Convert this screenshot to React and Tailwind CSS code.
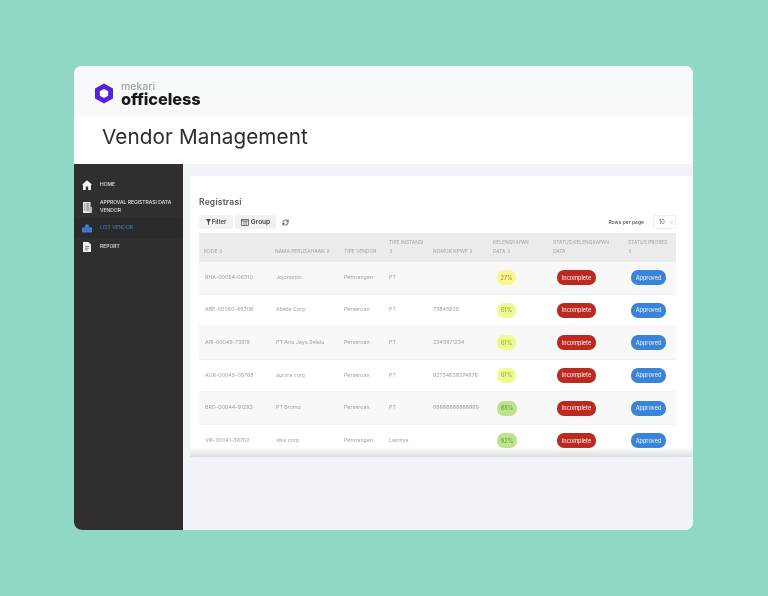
import React from "react";
import { RefreshCw, ChevronDown } from "lucide-react";

const font = { sans: "font-['Inter','Liberation_Sans',sans-serif]" };
const cols = "grid grid-cols-[71px_69px_45px_44px_60px_60px_75px_53px]";

const rows = [
  ["RHA-00054-06310", "Jojonomic", "Perorangan", "PT", "", "27%", "bg-[#f7f98f] text-[#a89a2c]", "w-[19px]"],
  ["ABE-00050-49308", "Abella Corp", "Perseroan", "PT", "73845829", "61%", "bg-[#eef98f] text-[#a2a93c]", "w-[19px]"],
  ["ARI-00049-73519", "PT Aria Jaya Selalu", "Perseroan", "PT", "2345671234", "61%", "bg-[#eef98f] text-[#a2a93c]", "w-[19px]"],
  ["AUR-00045-05768", "aurora corp", "Perseroan", "PT", "92734638274678", "61%", "bg-[#eef98f] text-[#a2a93c]", "w-[19px]"],
  ["BRO-00044-91283", "PT Bromo", "Perseroan", "PT", "68888888888889", "88%", "bg-[#bfe38d] text-[#6c9a3c]", "w-[20px]"],
  ["VIK-00041-36702", "vika corp", "Perorangan", "Lainnya", "", "92%", "bg-[#bfe38d] text-[#6c9a3c]", "w-[20px]"],
];

const headers = [
  ["KODE ⇕"],
  ["NAMA PERUSAHAAN ⇕"],
  ["TIPE VENDOR"],
  ["TIPE INSTANSI", "⇕"],
  ["NOMOR NPWP ⇕"],
  ["KELENGKAPAN", "DATA ⇕"],
  ["STATUS KELENGKAPAN", "DATA"],
  ["STATUS PROSES", "⇕"],
];

function Logo() {
  return (
    <svg width="20" height="21" viewBox="0 0 20 21">
      <path d="M10 .5 19 5.6v9.8l-9 5.1-9-5.1V5.6z" fill="#5a1fd8" />
      <path d="M10 6l4.2 2.3v4.4L10 15l-4.2-2.3V8.3z" fill="#fff" />
    </svg>
  );
}

function HomeIcon() {
  return (
    <svg width="10" height="10" viewBox="0 0 10 10" fill="#f4f4f4">
      <path d="M5 .3 9.8 4.6 9 5.2V10H6.2V6.6H3.8V10H1V5.2l-.8-.6z" />
    </svg>
  );
}

function ApprovalIcon() {
  return (
    <svg width="9" height="11" viewBox="0 0 9 11">
      <rect width="7.5" height="11" fill="#e8e8e8" />
      <rect x="6.5" y="5" width="2.5" height="6" fill="#bdbdbd" />
      <path d="M1 2h1.2M3.2 2h3M1 4h1.2M3.2 4h3M1 6h1.2M3.2 6h3M1 8h1.2M3.2 8h3" stroke="#444" strokeWidth=".8" />
    </svg>
  );
}

function VendorIcon() {
  return (
    <svg width="11" height="9" viewBox="0 0 11 9" fill="#3f80d6">
      <rect x="3.5" y="0" width="4" height="3.5" rx="1" />
      <rect x="0" y="3" width="11" height="6" rx="1" />
      <path d="M2 5h1M5 5h1M8 5h1M2 7h1M5 7h1M8 7h1" stroke="#24344f" strokeWidth=".7" />
    </svg>
  );
}

function ReportIcon() {
  return (
    <svg width="8" height="10" viewBox="0 0 8 10">
      <path d="M0 0h5.4L8 2.6V10H0z" fill="#f0f0f0" />
      <path d="M2 4.5h4M2 6.2h4M2 7.9h2.5" stroke="#555" strokeWidth=".7" />
    </svg>
  );
}

function TableIcon() {
  return (
    <svg width="8" height="7" viewBox="0 0 8 7" fill="none" stroke="#444" strokeWidth=".7">
      <rect x=".4" y=".4" width="7.2" height="6.2" />
      <path d="M.4 2h7.2M3 2v4.6M5.3 2v4.6" />
    </svg>
  );
}

function FilterIcon() {
  return (
    <svg width="5" height="6" viewBox="0 0 5 6" fill="#444">
      <path d="M0 0h5L3 3v3L2 5.4V3z" />
    </svg>
  );
}

function NavItem({ icon, active, children, className = "" }) {
  return (
    <div className={`flex items-center pl-[8px] ${active ? "bg-[#2a292b]" : ""} ${className}`}>
      <div className="flex w-[10px] justify-center">{icon}</div>
      <div className={`ml-[8px] text-[5px] leading-[7.7px] font-medium ${active ? "text-[#4b72ab]" : "text-[#e2e2e2]"}`}>{children}</div>
    </div>
  );
}

export default function App() {
  return (
    <div className={`flex h-[596px] w-[768px] items-start justify-center bg-[#8fd8c6] pt-[66px] pr-[1px] ${font.sans}`}>
      <div className="flex h-[464px] w-[619px] flex-col overflow-hidden rounded-[8px] bg-white">
        <div className="flex h-[50px] items-center gap-[7px] bg-[#f8f9fb] pt-[4px] pl-[20px]">
          <Logo />
          <div className="flex flex-col blur-[0.3px]">
            <span className="text-[10.5px] leading-[11px] font-medium text-[#a0a0a0]">mekari</span>
            <span className="text-[16.4px] leading-[14px] font-extrabold tracking-[-0.1px] text-[#18181c]">officeless</span>
          </div>
        </div>
        <div className="flex h-[48px] items-center bg-white pl-[28px] pb-[6px]">
          <h1 className="text-[20.7px] leading-[28px] font-normal tracking-[0.1px] text-[#2c2c30] blur-[0.3px]">Vendor Management</h1>
        </div>
        <div className="flex min-h-0 flex-1 blur-[0.35px]">
          <aside className="w-[109px] shrink-0 bg-[#302e30] pt-[12px]">
            <NavItem icon={<HomeIcon />} className="h-[18px]">HOME</NavItem>
            <NavItem icon={<ApprovalIcon />} className="mt-[3px] h-[20px]">
              <div className="whitespace-nowrap">APPROVAL REGISTRASI DATA</div>
              <div>VENDOR</div>
            </NavItem>
            <NavItem icon={<VendorIcon />} active className="mt-[1px] h-[20px]">LIST VENDOR</NavItem>
            <NavItem icon={<ReportIcon />} className="h-[18px]">REPORT</NavItem>
          </aside>
          <main className="flex-1 bg-[#f0f3f8] pt-[12px] pl-[7px]">
            <div className="relative h-[281px] bg-white pt-[21px] pl-[9px] pr-[17px]">
              <div className="text-[8.5px] leading-[11px] font-semibold tracking-[0.2px] text-[#555]">Registrasi</div>
              <div className="mt-[7px] flex h-[14px] items-center">
                <div className="flex h-[14px] w-[34px] items-center justify-center gap-[1px] rounded-[2px] bg-[#f3f3f3] text-[6px] leading-[14px] font-semibold text-[#444]">
                  <FilterIcon />Filter
                </div>
                <div className="ml-[2px] flex h-[14px] w-[41px] items-center justify-center gap-[2px] rounded-[2px] bg-[#f1f1f1] text-[6.5px] leading-[14px] font-semibold text-[#444]">
                  <TableIcon />Group
                </div>
                <RefreshCw className="ml-[6px] h-[7px] w-[7px] text-[#333]" strokeWidth={2.5} />
                <div className="ml-auto text-[5px] leading-[14px] font-medium text-[#555]">Rows per page</div>
                <div className="ml-[9px] flex h-[14px] w-[23px] items-center justify-between rounded-[2px] border border-[#eeeeee] pl-[5px] pr-[1px] text-[5.5px] text-[#555]">
                  10
                  <ChevronDown className="h-[5px] w-[5px] text-[#777]" />
                </div>
              </div>
              <div className="mt-[4px]">
                <div className={`${cols} h-[29px] items-end bg-[#ebebeb] pb-[6px] text-[4.9px] leading-[9px] text-[#a6a6a6]`}>
                  {headers.map((h, i) => (
                    <div key={i} className="pl-[5px]">
                      {h.map((line) => (
                        <div key={line} className="whitespace-nowrap">{line}</div>
                      ))}
                    </div>
                  ))}
                </div>
                {rows.map((r, i) => (
                  <div
                    key={r[0]}
                    className={`${cols} h-[32.6px] items-center border-b border-[#f1f1f1] text-[5.3px] text-[#a3a3a3] ${i % 2 === 0 ? "bg-[#f8f8f8]" : "bg-white"}`}
                  >
                    <div className="pl-[6px] whitespace-nowrap">{r[0]}</div>
                    <div className="pl-[6px] whitespace-nowrap">{r[1]}</div>
                    <div className="pl-[5px] whitespace-nowrap">{r[2]}</div>
                    <div className="pl-[5px] whitespace-nowrap">{r[3]}</div>
                    <div className="pl-[5px] whitespace-nowrap">{r[4]}</div>
                    <div className="pl-[4px]">
                      <div className={`ml-[5px] flex h-[15px] items-center justify-center rounded-[7px] text-[5.5px] font-medium ${r[6]} ${r[7]}`}>{r[5]}</div>
                    </div>
                    <div className="pl-[4px]">
                      <div className="ml-[5px] flex h-[15px] w-[39px] items-center justify-center rounded-[7px] bg-[#bb2a20] text-[5.5px] font-medium text-[#f8e4e1]">Incomplete</div>
                    </div>
                    <div className="pl-[3px]">
                      <div className="ml-[5px] flex h-[15px] w-[35px] items-center justify-center rounded-[7px] bg-[#3a83da] text-[5.5px] font-medium text-[#dbe9f9]">Approved</div>
                    </div>
                  </div>
                ))}
              </div>
              <div className="absolute inset-x-0 bottom-0 h-[10px] bg-gradient-to-b from-transparent to-[#dcdee3]" />
            </div>
          </main>
        </div>
      </div>
    </div>
  );
}
